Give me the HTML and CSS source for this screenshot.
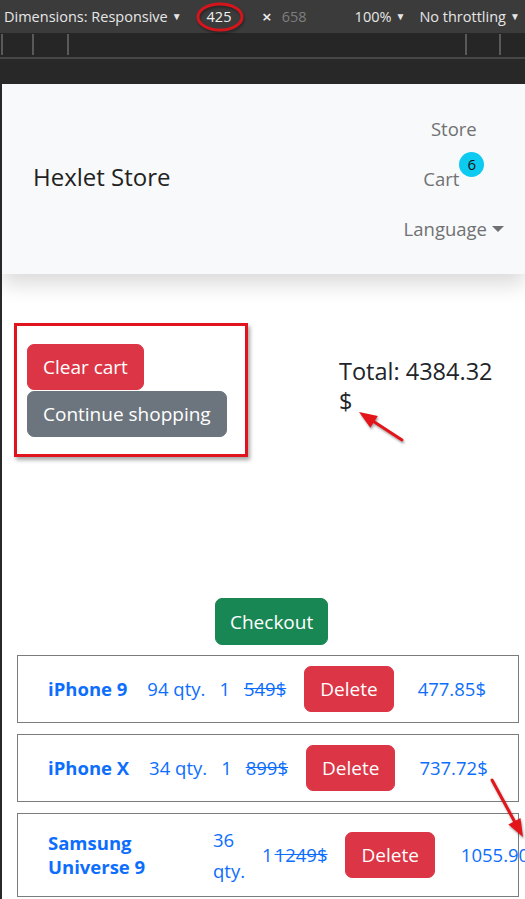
FILE: index.html
```html
<!DOCTYPE html>
<html lang="en">
<head>
<meta charset="utf-8">
<title>Hexlet Store - Cart</title>
<link rel="stylesheet" href="styles.css">
</head>
<body>
<div class="dt-toolbar">
  <span class="dt-dims">Dimensions: Responsive<span class="dt-caret">&#9660;</span></span>
  <span class="dt-w">425</span>
  <span class="dt-x">&#215;</span>
  <span class="dt-h">658</span>
  <span class="dt-zoom">100%<span class="dt-caret">&#9660;</span></span>
  <span class="dt-throttle">No throttling<span class="dt-caret">&#9660;</span></span>
</div>
<div class="dt-ruler">
  <div class="seg seg-a"></div>
  <div class="seg seg-b"></div>
  <div class="seg seg-c"></div>
  <div class="seg seg-d"></div>
  <div class="seg seg-e"></div>
</div>
<div class="dt-gap"></div>
<div class="viewport">
  <nav class="navbar">
    <span class="brand">Hexlet Store</span>
    <div class="nav-col">
      <a class="nav-link">Store</a>
      <a class="nav-link cart-link">Cart<span class="badge">6</span></a>
      <a class="nav-link dropdown">Language<span class="caret"></span></a>
    </div>
  </nav>
  <section class="cart-head">
    <div class="annot-box">
      <button class="btn btn-danger">Clear cart</button>
      <button class="btn btn-secondary">Continue shopping</button>
    </div>
    <h5 class="total">Total: 4384.32 $</h5>
  </section>
  <button class="btn btn-success checkout">Checkout</button>
  <ul class="items">
    <li class="item">
      <a class="name">iPhone 9</a>
      <span class="qty">94 qty.</span>
      <span class="count">1</span>
      <del class="old">549$</del>
      <button class="btn btn-danger del">Delete</button>
      <span class="price">477.85$</span>
    </li>
    <li class="item">
      <a class="name">iPhone X</a>
      <span class="qty">34 qty.</span>
      <span class="count">1</span>
      <del class="old">899$</del>
      <button class="btn btn-danger del">Delete</button>
      <span class="price">737.72$</span>
    </li>
    <li class="item item-wrap">
      <a class="name">Samsung Universe 9</a>
      <span class="qty">36 qty.</span>
      <span class="count">1</span>
      <del class="old">1249$</del>
      <button class="btn btn-danger del">Delete</button>
      <span class="price">1055.90$</span>
    </li>
  </ul>
</div>
<svg class="annotations" width="525" height="899" viewBox="0 0 525 899">
  <ellipse cx="220" cy="17" rx="22" ry="13" fill="none" stroke="#d4161c" stroke-width="3"/>
  <line x1="402" y1="440" x2="374" y2="421.8" stroke="#e4141b" stroke-width="3" stroke-linecap="round"/>
  <polygon points="359,412 377.9,415.9 370.3,427.7" fill="#e4141b"/>
  <line x1="492" y1="780" x2="514.4" y2="821.2" stroke="#e4141b" stroke-width="3" stroke-linecap="round"/>
  <polygon points="523,837 520.5,817.9 508.3,824.5" fill="#e4141b"/>
</svg>
</body>
</html>
```
FILE: styles.css
```css
* { box-sizing: border-box; }

html, body {
  margin: 0;
  padding: 0;
}

body {
  width: 525px;
  height: 899px;
  overflow: hidden;
  position: relative;
  background: #282828;
  font-family: "Open Sans", "Noto Sans", sans-serif;
}

/* ---------- devtools chrome ---------- */
.dt-toolbar {
  height: 33px;
  background: #3b3b3b;
  display: flex;
  align-items: center;
  font-size: 14.5px;
  color: #e6e6e6;
  white-space: nowrap;
}
.dt-caret {
  font-size: 10px;
  margin-left: 4px;
  position: relative;
  top: -2px;
}
.dt-dims { margin-left: 4px; width: 199px; }
.dt-w { width: 32px; text-align: center; color: #f2f2f2; }
.dt-x { margin-left: 27px; font-size: 17px; color: #eee; font-weight: 600; }
.dt-h { margin-left: 10px; color: #7e7e7e; }
.dt-zoom { margin-left: 48px; }
.dt-throttle { margin-left: 14px; }

.dt-ruler {
  height: 26px;
  background: #262626;
  display: flex;
  align-items: stretch;
  padding: 1px 0 2px;
  border-bottom: 2px solid #474747;
}
.seg { border-left: 2px solid #595959; }
.seg-a { margin-left: 1px; width: 31px; }
.seg-b { width: 35px; }
.seg-c { width: 398px; }
.seg-d { width: 34px; }
.seg-e { flex: 1; }

.dt-gap {
  height: 25px;
  background: #282828;
}

/* ---------- page viewport ---------- */
.viewport {
  margin-left: 2px;
  height: 815px;
  background: #fff;
  overflow: hidden;
  color: #212529;
}

.navbar {
  height: 190px;
  background: #f8f9fa;
  box-shadow: 0 10px 20px rgba(0, 0, 0, 0.15);
  display: flex;
  justify-content: space-between;
  align-items: center;
  padding: 0 21px 6px 31px;
  position: relative;
}
.brand {
  font-size: 24px;
  color: #222;
}
.nav-col {
  display: flex;
  flex-direction: column;
  align-items: center;
  padding-top: 6px;
}
.nav-link {
  display: inline-flex;
  align-items: flex-start;
  font-size: 18.5px;
  line-height: 30px;
  padding: 10px 0;
  color: #707172;
}
.badge {
  width: 25px;
  height: 25px;
  border-radius: 50%;
  background: #0dcaf0;
  color: #111;
  font-size: 15px;
  line-height: 25px;
  text-align: center;
  position: relative;
  top: -12px;
}
.caret {
  width: 0;
  height: 0;
  border-top: 6px solid #707172;
  border-left: 6px solid transparent;
  border-right: 6px solid transparent;
  margin-left: 5px;
  align-self: center;
}

/* ---------- buttons ---------- */
.btn {
  display: inline-block;
  font-family: inherit;
  font-size: 19px;
  line-height: 30px;
  padding: 7px 15px;
  border: 1px solid transparent;
  border-radius: 7px;
  color: #fff;
  white-space: nowrap;
}
.btn-danger { background: #dc3545; border-color: #dc3545; }
.btn-secondary { background: #6c757d; border-color: #6c757d; }
.btn-success { background: #198754; border-color: #198754; }

/* ---------- cart header ---------- */
.cart-head {
  display: flex;
  align-items: flex-start;
  padding-top: 49px;
}
.annot-box {
  margin-left: 12px;
  width: 234px;
  height: 134px;
  border: 3px solid #e0141e;
  box-shadow: 2px 3px 4px rgba(0, 0, 0, 0.35);
  padding: 18px 0 0 10px;
  display: flex;
  flex-direction: column;
  align-items: flex-start;
}
.annot-box .btn-secondary { margin-top: 1px; }
.total {
  margin: 33px 0 0 91px;
  width: 165px;
  font-size: 23.5px;
  line-height: 30px;
  font-weight: 400;
}

.checkout {
  margin: 141px 0 0 213px;
  height: 47px;
  padding-left: 14px;
  padding-right: 14px;
}

/* ---------- items ---------- */
.items {
  list-style: none;
  margin: 10px 0 0 15px;
  padding: 0;
  width: 502px;
  display: flex;
  flex-direction: column;
  gap: 11px;
}
.item {
  border: 1px solid #7c7c7c;
  padding: 10px 0 10px 30px;
  display: flex;
  align-items: center;
  color: #0d6efd;
  font-size: 18.5px;
  line-height: 30px;
  white-space: nowrap;
}
.item .name { font-weight: 700; color: #0d6efd; }
.item .qty { margin-left: 20px; }
.item .count { margin-left: 14px; }
.item .old { margin-left: 14px; }
.item .del { margin-left: 18px; }
.item .price { margin-left: 24px; }

.item-wrap { white-space: normal; }
.item-wrap .name { width: 110px; line-height: 24px; flex-shrink: 0; }
.item-wrap .qty { margin-left: 55px; width: 40px; flex-shrink: 0; line-height: 31px; }
.item-wrap .count { margin-left: 9px; }
.item-wrap .old { margin-left: 2px; }
.item-wrap .del { margin-left: 18px; flex-shrink: 0; }
.item-wrap .price { margin-left: 26px; white-space: nowrap; flex-shrink: 0; }

/* ---------- annotation overlay ---------- */
.annotations {
  position: absolute;
  top: 0;
  left: 0;
  pointer-events: none;
  filter: drop-shadow(1px 2px 1px rgba(0, 0, 0, 0.35));
}
```
